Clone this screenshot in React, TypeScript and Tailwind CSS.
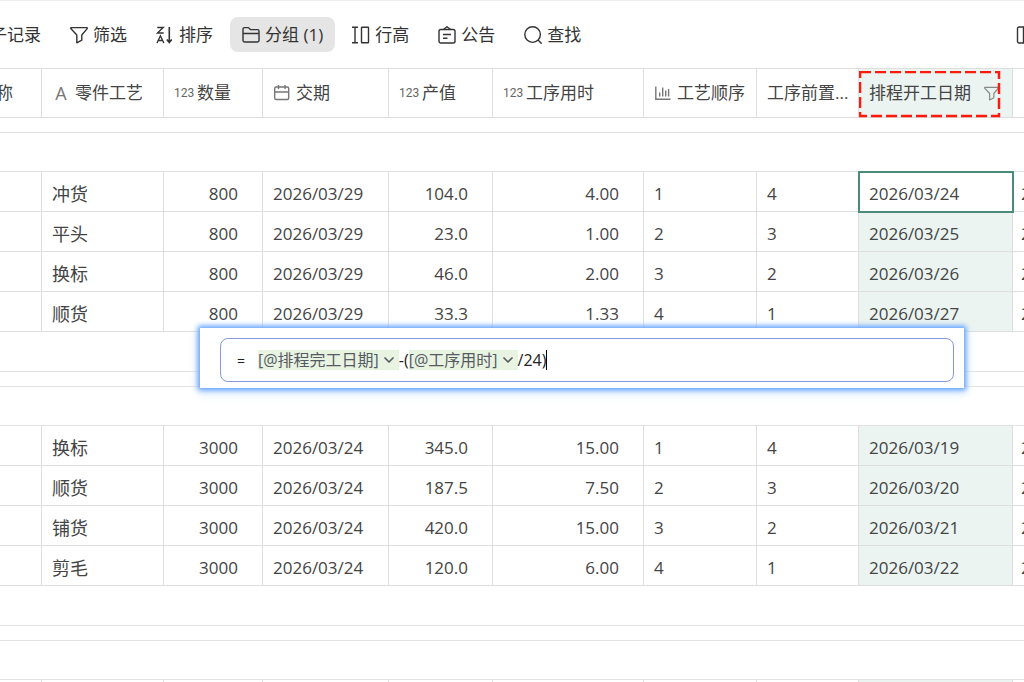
import type { ReactNode } from "react";
import { clsx } from "clsx";
import { ChevronDown } from "lucide-react";

type Row = [string, string, string, string, string, string, string, string];

interface Column {
  label: string;
  icon?: ReactNode;
  width: string;
  numeric?: boolean;
}

function Icon({ children, className = "size-[18px]" }: { children: ReactNode; className?: string }) {
  return (
    <svg
      viewBox="0 0 18 18"
      className={clsx("shrink-0", className)}
      fill="none"
      stroke="currentColor"
      strokeWidth="1.4"
      aria-hidden="true"
    >
      {children}
    </svg>
  );
}

const FilterIcon = ({ className }: { className?: string }) => (
  <Icon className={className}>
    <path d="M.8 1.6h16.4v1L11.8 9v5.2l-5 2.6V9L.8 2.6z" strokeLinejoin="round" />
  </Icon>
);

const SortIcon = () => (
  <Icon>
    <path d="M1.3 1.5h5.9L1.5 7h6.2M1 17l3.400-7.200L7.800 17M2.200 14.500h4.400" />
    <path d="M13.300 1v15.500M10.800 13.500l2.500 3 2.500-3" strokeWidth="1.600" />
  </Icon>
);

const GroupIcon = () => (
  <Icon>
    <path d="M1 7.500V3a1.400 1.400 0 0 1 1.400-1.400h4l2 2h7.200A1.400 1.400 0 0 1 17 5v9.600a1.400 1.400 0 0 1-1.400 1.400H2.400A1.400 1.400 0 0 1 1 14.600V7.500h16" />
  </Icon>
);

const RowHeightIcon = () => (
  <Icon>
    <path d="M0 1.200h6M0 16.800h6M3 1.200v15.600" />
    <rect x="9.500" y="1.200" width="7" height="15.600" rx=".5" />
  </Icon>
);

const NoticeIcon = () => (
  <Icon>
    <rect x="1" y="3.500" width="16" height="13.500" rx="1.800" />
    <path d="M5.500 3.500 9 .8l3.500 2.700M5 8.500h8M5 12.200h4.500" />
  </Icon>
);

const SearchIcon = () => (
  <Icon>
    <circle cx="8.600" cy="8.600" r="7.800" />
    <path d="m14 14 3.700 3.700" />
  </Icon>
);

const CalendarIcon = () => (
  <Icon className="size-[18px] text-[#777]">
    <rect x="1.700" y="3" width="14" height="12.500" rx="1.500" />
    <path d="M1.700 8h14M5.500 1v4M12 1v4" />
  </Icon>
);

const ChartIcon = () => (
  <Icon className="size-[18px] text-[#777]">
    <path d="M1.800 2.500V15.300h14.700M5.700 8.500v4M8.700 3.500v9M11.700 6.500v6M14.600 5v7.500" />
  </Icon>
);

const NumberMark = () => (
  <span className="w-[18px] shrink-0 font-['Liberation_Sans_Narrow',Roboto,sans-serif] text-[12px] text-[#666]">123</span>
);

const TextMark = () => (
  <span className="w-[18px] shrink-0 text-center text-[18px] text-[#777]">A</span>
);

const columns: Column[] = [
  { label: "名称", width: "w-[42px]" },
  { label: "零件工艺", icon: <TextMark />, width: "w-[122px]" },
  { label: "数量", icon: <NumberMark />, width: "w-[99px]", numeric: true },
  { label: "交期", icon: <CalendarIcon />, width: "w-[126px]" },
  { label: "产值", icon: <NumberMark />, width: "w-[104px]", numeric: true },
  { label: "工序用时", icon: <NumberMark />, width: "w-[151px]", numeric: true },
  { label: "工艺顺序", icon: <ChartIcon />, width: "w-[113px]" },
  { label: "工序前置...", width: "w-[102px]" },
  { label: "排程开工日期", width: "w-[154px]" },
];

const START_DATE = 8;

const groups: Row[][] = [
  [
    ["冲货", "800", "2026/03/29", "104.0", "4.00", "1", "4", "2026/03/24"],
    ["平头", "800", "2026/03/29", "23.0", "1.00", "2", "3", "2026/03/25"],
    ["换标", "800", "2026/03/29", "46.0", "2.00", "3", "2", "2026/03/26"],
    ["顺货", "800", "2026/03/29", "33.3", "1.33", "4", "1", "2026/03/27"],
  ],
  [
    ["换标", "3000", "2026/03/24", "345.0", "15.00", "1", "4", "2026/03/19"],
    ["顺货", "3000", "2026/03/24", "187.5", "7.50", "2", "3", "2026/03/20"],
    ["铺货", "3000", "2026/03/24", "420.0", "15.00", "3", "2", "2026/03/21"],
    ["剪毛", "3000", "2026/03/24", "120.0", "6.00", "4", "1", "2026/03/22"],
  ],
];

const tools = [
  { label: "筛选", icon: <FilterIcon /> },
  { label: "排序", icon: <SortIcon /> },
  { label: "分组 (1)", icon: <GroupIcon />, active: true },
  { label: "行高", icon: <RowHeightIcon /> },
  { label: "公告", icon: <NoticeIcon /> },
  { label: "查找", icon: <SearchIcon /> },
];

function Toolbar() {
  return (
    <header className="flex h-[68px] items-center gap-[5px] overflow-hidden border-t border-[#eee] text-[17px] text-[#333]">
      <button type="button" className="flex w-[53px] shrink-0 justify-end whitespace-nowrap pr-3">
        子记录
      </button>
      {tools.map(tool => (
        <button
          key={tool.label}
          type="button"
          className={clsx(
            "flex h-[35px] shrink-0 items-center gap-[5px] whitespace-nowrap rounded-lg px-3",
            tool.active && "bg-[#e5e5e5]"
          )}
        >
          {tool.icon}
          {tool.label}
        </button>
      ))}
      <button type="button" aria-label="视图" className="ml-auto w-[8px] shrink-0 overflow-hidden">
        <Icon>
          <rect x="1.500" y="1" width="15" height="16" rx="1.500" />
          <path d="M7.500 1v16" />
        </Icon>
      </button>
    </header>
  );
}

function SpacerRow({ height }: { height: string }) {
  return (
    <tr className={height}>
      <td colSpan={10} className="border-b border-[#e2e2e2] p-0" />
    </tr>
  );
}

function Token({ name }: { name: string }) {
  return (
    <button type="button" className="flex h-5 items-center gap-0.5 bg-[#e9f3e2] pr-0.5 text-[#555b62]">
      [@{name}]
      <ChevronDown className="size-4" strokeWidth={2.5} />
    </button>
  );
}

function FormulaEditor() {
  return (
    <div className="absolute left-[200px] right-[60px] top-[328px] h-[60px] bg-white py-2.5 pl-5 pr-2.5 shadow-[0_0_5px_2px_#5c9fff,0_3px_10px_2px_#d5e6ff]">
      <div
        role="textbox"
        aria-label="公式"
        className="flex h-[44px] items-center rounded-lg border border-[#8499dd] pl-4 text-[16px] text-[#222]"
      >
        <span className="w-[21px] text-[14px]">=</span>
        <Token name="排程完工日期" />
        <span>-(</span>
        <Token name="工序用时" />
        <span>/24)</span>
        <span className="h-5 w-px bg-black" />
      </div>
    </div>
  );
}

export default function App() {
  return (
    <main className="relative h-screen overflow-hidden bg-white font-['Open_Sans','Noto_Sans_CJK_SC',sans-serif] text-[#444]">
      <Toolbar />
      <table className="w-full table-fixed border-separate border-spacing-0">
        <thead>
          <tr className="h-[50px]">
            {columns.map((col, i) => (
              <th
                key={col.label}
                className={clsx(
                  "border-y border-r border-[#dedede] p-0 font-normal",
                  col.width,
                  i === START_DATE && "relative bg-[#ebf4f1]"
                )}
              >
                <div
                  className={clsx(
                    "flex items-center gap-[5px] whitespace-nowrap text-[17px]",
                    i === 0 ? "justify-end overflow-hidden pr-7" : "pl-2.5"
                  )}
                >
                  {col.icon}
                  {col.label}
                  {i === START_DATE && <FilterIcon className="ml-2 size-[15px] text-[#888]" />}
                </div>
                {i === START_DATE && (
                  <svg className="absolute left-0 top-[2px] h-[47px] w-[142px]" aria-hidden="true">
                    <rect x="1" y="1" width="139" height="44" fill="none" stroke="#ff1a0d" strokeWidth="2.500" strokeDasharray="11 4" />
                  </svg>
                )}
              </th>
            ))}
            <th className="border-y border-[#dedede] p-0" />
          </tr>
        </thead>
        <tbody>
          <SpacerRow height="h-[15px]" />
          <SpacerRow height="h-[39px]" />
        </tbody>
        {groups.map((rows, g) => (
          <tbody key={g}>
            {rows.map((row, r) => (
              <tr key={r} className="h-10">
                <td className="border-b border-r border-[#dedede] p-0" />
                {row.map((value, c) => {
                  const index = c + 1;
                  const selected = g === 0 && r === 0 && index === START_DATE;
                  return (
                    <td
                      key={c}
                      className={clsx(
                        "border-b border-r border-[#dedede] pb-0 pt-1 leading-6",
                        index === 1 ? "text-[18px]" : "text-[17px]",
                        columns[index].numeric ? "pr-6 text-right" : "pl-2.5",
                        index === START_DATE && !selected && "bg-[#ebf4f1]",
                        selected && "relative outline-2 -outline-offset-1 outline-[#4c8b7a]"
                      )}
                    >
                      {value}
                    </td>
                  );
                })}
                <td className="overflow-hidden border-b border-[#dedede] pb-0 pl-2 pt-1 text-[17px] leading-6">2</td>
              </tr>
            ))}
            <SpacerRow height="h-10" />
            <SpacerRow height="h-[15px]" />
            <SpacerRow height="h-[39px]" />
          </tbody>
        ))}
        <tbody>
          <tr className="h-10">
            {columns.map((col, i) => (
              <td
                key={col.label}
                className={clsx("border-b border-r border-[#dedede] p-0", i === START_DATE && "bg-[#ebf4f1]")}
              />
            ))}
            <td className="border-b border-[#dedede] p-0" />
          </tr>
        </tbody>
      </table>
      <FormulaEditor />
    </main>
  );
}
